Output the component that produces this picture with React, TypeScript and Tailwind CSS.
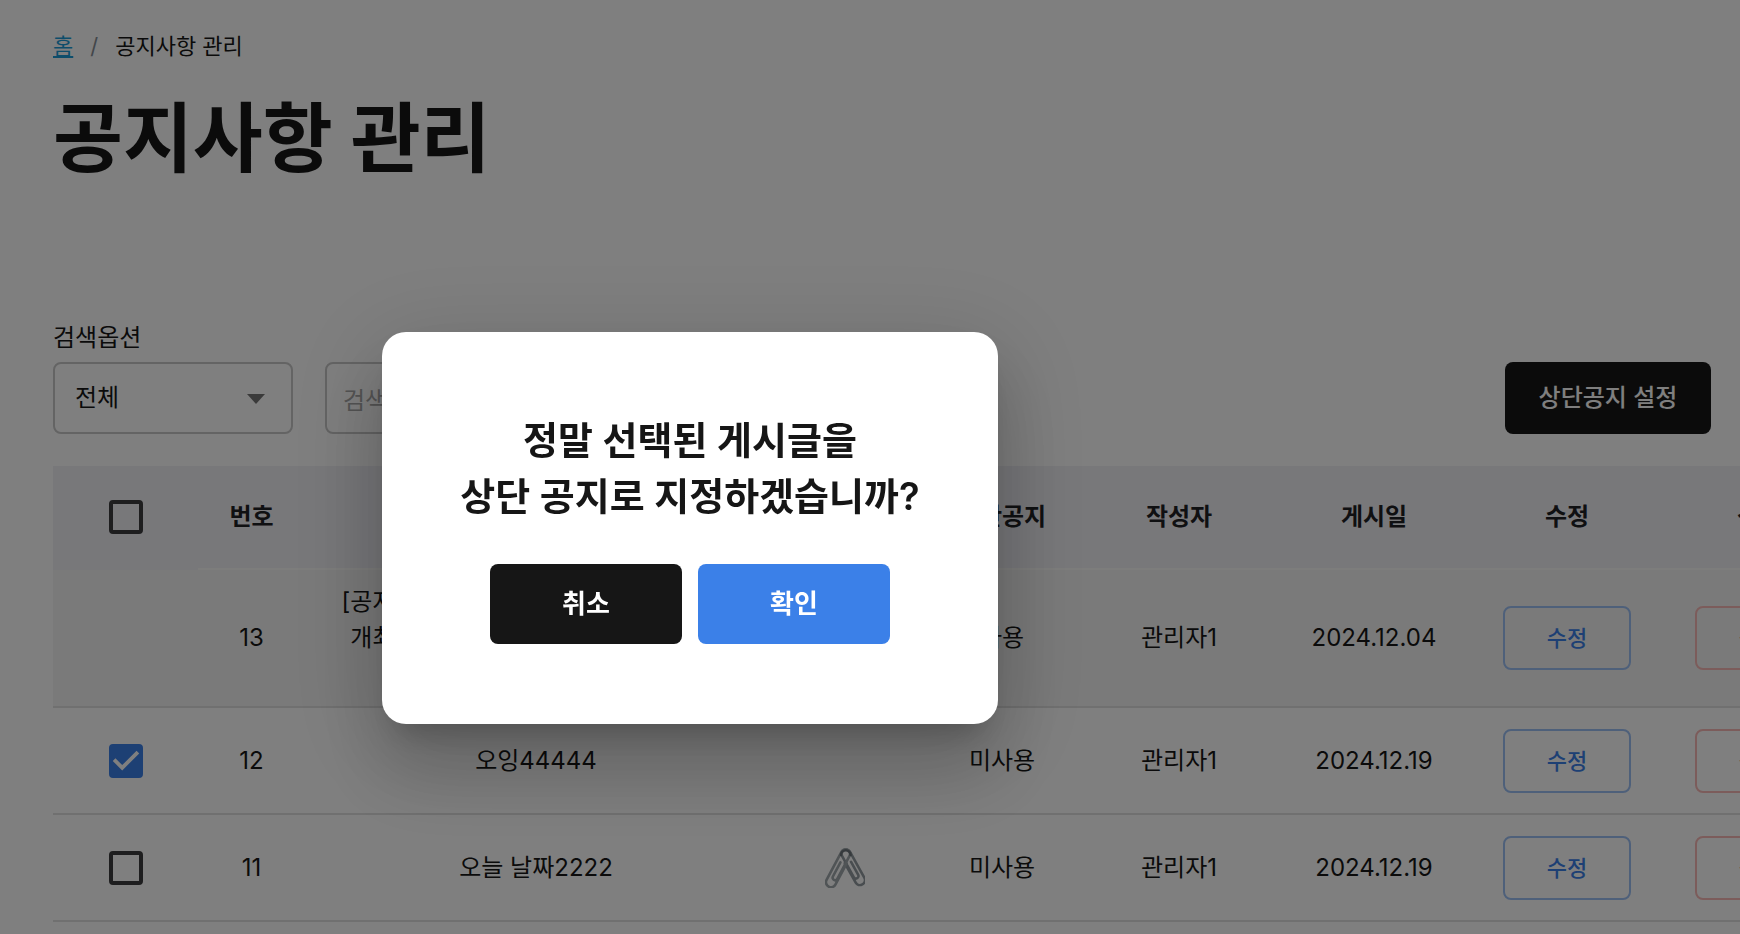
import React, { useState } from 'react';

interface Notice {
  id: number;
  title: React.ReactNode;
  pinned: boolean;
  hasFile?: boolean;
  author: string;
  date: string;
}

const notices: Notice[] = [
  {
    id: 13,
    title: (
      <>
        [공지] 신년 맞이 온라인 세미나 행사 및
        <br />
        개최 안내사항 및 참가 신청 방법 관련
        <br />
        공지사항
      </>
    ),
    pinned: true,
    author: '관리자1',
    date: '2024.12.04',
  },
  { id: 12, title: '오잉44444', pinned: false, author: '관리자1', date: '2024.12.19' },
  { id: 11, title: '오늘 날짜2222', pinned: false, hasFile: true, author: '관리자1', date: '2024.12.19' },
];

interface CheckboxProps {
  label: string;
  checked: boolean;
  onChange: (checked: boolean) => void;
}

const Checkbox: React.FC<CheckboxProps> = ({ label, checked, onChange }) => (
  <span className="relative mx-auto block size-[34px]">
    <input
      type="checkbox"
      aria-label={label}
      checked={checked}
      onChange={(e) => onChange(e.target.checked)}
      className="block size-full appearance-none rounded border-4 border-[#3c3c3e] checked:border-[#3b80e8] checked:bg-[#3b80e8]"
    />
    {checked && (
      <svg viewBox="3 3 18 18" className="pointer-events-none absolute inset-0 size-full fill-white">
        <path d="M10 17l-5-5 1.41-1.41L10 14.17l7.59-7.59L19 8l-9 9z" />
      </svg>
    )}
  </span>
);

const clipPath = 'M5 8V32a5 5 0 0 1-10 0V0a4.5 4.5 0 0 1 9 0V26a2.5 2.5 0 0 1-5 0V10';

const LinkedClips = () => (
  <svg viewBox="0 0 40 40" className="mx-auto size-10" fill="none" strokeLinecap="round" strokeWidth="2.6">
    <path d={clipPath} transform="translate(20.5 6) rotate(-29) scale(-1 0.94)" stroke="#929ba0" />
    <path d={clipPath} transform="translate(21 6) rotate(28)" stroke="#a0a8ac" />
    <path d="M16 7a4.8 4.8 0 0 1 9.6 0" stroke="#6c757a" />
  </svg>
);

const rowButton = 'block mx-auto h-16 w-32 rounded-lg border-2 text-[22px] font-medium';

const NoticeTable: React.FC = () => {
  const [selected, setSelected] = useState<number[]>([12]);

  const toggle = (id: number, on: boolean) =>
    setSelected((prev) => (on ? [...prev, id] : prev.filter((v) => v !== id)));

  return (
    <table className="mt-8 w-[1802px] table-fixed border-separate border-spacing-0 text-center">
      <colgroup>
        <col className="w-[145px]" />
        <col className="w-[107px]" />
        <col className="w-[462px]" />
        <col className="w-[156px]" />
        <col className="w-[158px]" />
        <col className="w-[196px]" />
        <col className="w-[194px]" />
        <col className="w-[192px]" />
        <col className="w-[192px]" />
      </colgroup>
      <thead>
        <tr className="h-[104px] bg-[#f0f0f5] text-[#1f2124] *:border-b-2 *:font-semibold">
          <th className="border-transparent">
            <Checkbox
              label="전체 선택"
              checked={selected.length === notices.length}
              onChange={(on) => setSelected(on ? notices.map((n) => n.id) : [])}
            />
          </th>
          {['번호', '제목', '첨부파일', '상단공지', '작성자', '게시일', '수정', '삭제'].map((name) => (
            <th key={name} className="border-[#fafaf8]">
              {name}
            </th>
          ))}
        </tr>
      </thead>
      <tbody>
        {notices.map((n) => (
          <tr
            key={n.id}
            className={`*:border-b-2 *:border-[#e0e0e0] ${n.pinned ? 'h-[138px] bg-[#f5f5f5]' : 'h-[107px]'}`}
          >
            <td>
              {!n.pinned && (
                <Checkbox
                  label={`${n.id}번 선택`}
                  checked={selected.includes(n.id)}
                  onChange={(on) => toggle(n.id, on)}
                />
              )}
            </td>
            <td>{n.id}</td>
            <td className="px-8">{n.title}</td>
            <td>{n.hasFile && <LinkedClips />}</td>
            <td>{n.pinned ? '사용' : '미사용'}</td>
            <td>{n.author}</td>
            <td>{n.date}</td>
            <td>
              <button className={`${rowButton} border-[#9dc0f4] text-[#3b80e8]`}>수정</button>
            </td>
            <td>
              <button className={`${rowButton} border-[#f9b9b6] text-[#ef4444]`}>삭제</button>
            </td>
          </tr>
        ))}
      </tbody>
    </table>
  );
};

const ConfirmDialog: React.FC = () => (
  <div className="fixed inset-0 bg-black/50">
    <div
      role="dialog"
      aria-modal="true"
      aria-labelledby="confirm-title"
      className="absolute top-[332px] left-[382px] w-[616px] rounded-3xl bg-white py-20 text-center shadow-[0_22px_30px_-14px_rgba(0,0,0,0.2),0_48px_76px_6px_rgba(0,0,0,0.14),0_18px_92px_16px_rgba(0,0,0,0.12)]"
    >
      <h2 id="confirm-title" className="text-[38px] leading-14 font-semibold text-[#161616]">
        정말 선택된 게시글을
        <br />
        상단 공지로 지정하겠습니까?
      </h2>
      <div className="mt-10 flex justify-center gap-4 text-[26px] font-semibold text-white">
        <button className="h-20 w-48 rounded-lg bg-[#161616]">취소</button>
        <button className="h-20 w-48 rounded-lg bg-[#3b80e8]">확인</button>
      </div>
    </div>
  </div>
);

export default function App() {
  return (
    <div className="min-h-screen overflow-hidden bg-white pt-[30px] pl-[53px] font-[Inter,'Noto_Sans_CJK_KR',sans-serif] text-2xl leading-9 text-[#161616]">
      <nav className="flex gap-[17px] text-[22px] leading-8">
        <a href="#" className="text-[#1a9bd7] underline underline-offset-2">
          홈
        </a>
        <span className="text-[#868e96]">/</span>
        <span>공지사항 관리</span>
      </nav>
      <h1 className="mt-7 text-[76px] leading-24 font-bold">공지사항 관리</h1>

      <div className="mt-34 flex items-end justify-between pr-[29px]">
        <div className="flex items-end gap-8">
          <div className="flex flex-col gap-2">
            <label htmlFor="search-option" className="leading-8">
              검색옵션
            </label>
            <div className="relative">
              <select
                id="search-option"
                className="h-18 w-60 appearance-none rounded-lg border-2 border-[#c8c8c8] bg-white px-5"
              >
                <option>전체</option>
                <option>제목</option>
              </select>
              <svg
                viewBox="0 0 18 10"
                className="pointer-events-none absolute top-8 right-7 h-[10px] w-[18px] fill-[#757575]"
              >
                <path d="M0 0h18l-9 10z" />
              </svg>
            </div>
          </div>
          <input
            type="text"
            aria-label="검색어"
            placeholder="검색어를 입력해주세요"
            className="h-18 w-[480px] rounded-lg border-2 border-[#c8c8c8] px-4 pt-1 placeholder:text-[#a8a8a8]"
          />
        </div>
        <button className="h-18 w-[206px] rounded-lg bg-[#161616] font-medium text-white">상단공지 설정</button>
      </div>

      <NoticeTable />
      <ConfirmDialog />
    </div>
  );
}
